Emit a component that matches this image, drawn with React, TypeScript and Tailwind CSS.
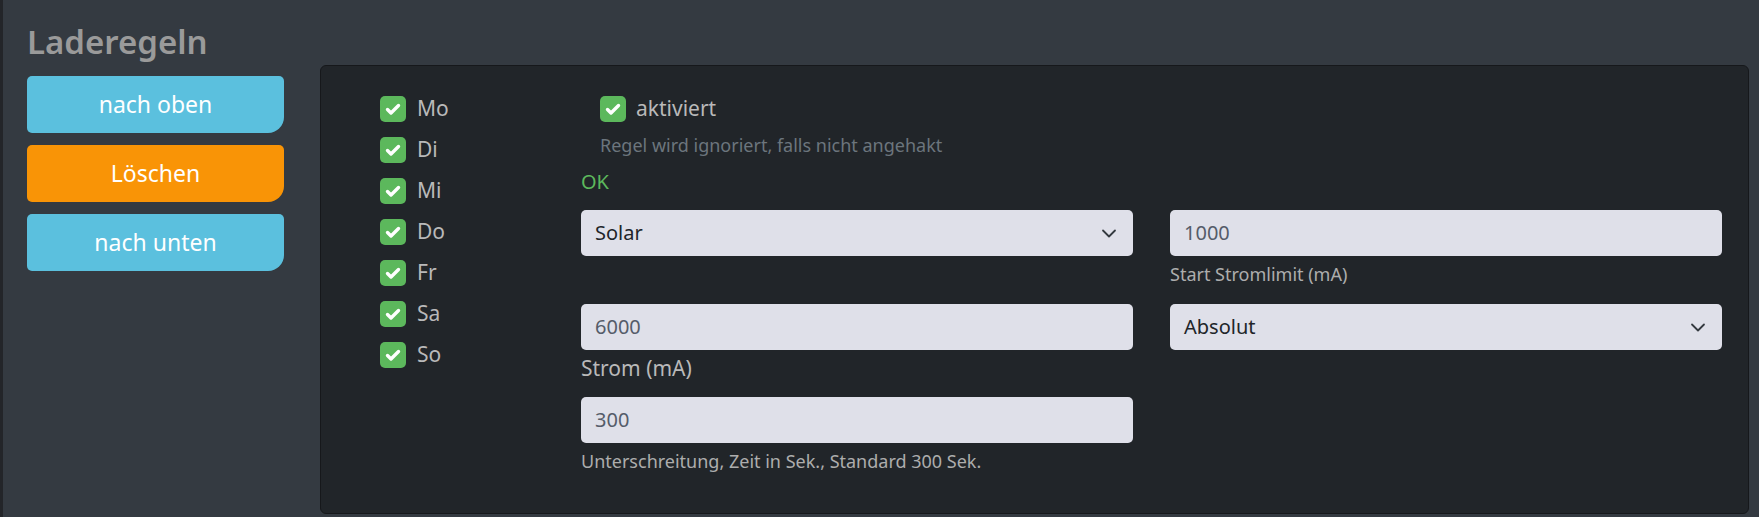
import React from 'react';

const days = ['Mo', 'Di', 'Mi', 'Do', 'Fr', 'Sa', 'So'];

function Check() {
  return (
    <span className="flex h-[26px] w-[26px] shrink-0 items-center justify-center rounded-[5px] bg-[#5cb85c]">
      <svg viewBox="0 0 26 26" className="h-[26px] w-[26px]" fill="none">
        <path d="M7.5 13.5l3.5 3.5l7.5-7.5" stroke="#fff" strokeWidth="3.4" strokeLinecap="round" strokeLinejoin="round" />
      </svg>
    </span>
  );
}

function Select({ value }: { value: string }) {
  return (
    <div className="flex h-[46px] items-center justify-between rounded-[5px] bg-[#dfe0e9] pl-[14px] pr-[16px] text-[20px] text-[#212529]">
      <span>{value}</span>
      <svg viewBox="0 0 16 16" className="h-[16px] w-[16px]" fill="none">
        <path d="M2 5.5l6 6l6-6" stroke="#343a40" strokeWidth="1.8" strokeLinecap="round" strokeLinejoin="round" />
      </svg>
    </div>
  );
}

function Field({ value }: { value: string }) {
  return (
    <div className="flex h-[46px] items-center rounded-[5px] bg-[#dfe0e9] pl-[14px] text-[20px] text-[#555c69]">
      {value}
    </div>
  );
}

export default function App() {
  return (
    <div
      className="min-h-[517px] border-l-[3px] border-[#232529] bg-[#343a41] pl-[24px]"
      style={{ fontFamily: '"Noto Sans", sans-serif' }}
    >
      <div className="flex items-start gap-[36px]">
        {/* Linke Spalte */}
        <div className="w-[257px] shrink-0">
          <h2 className="pt-[20px] text-[33px] font-semibold leading-[44px] text-[#9a9a9a]">Laderegeln</h2>
          <div className="mt-[12px] flex flex-col gap-[12px]">
            <button className="h-[57px] rounded-[5px] rounded-br-[16px] bg-[#5bc0de] text-[23px] text-white">nach oben</button>
            <button className="h-[57px] rounded-[5px] rounded-br-[16px] bg-[#f99406] text-[23px] text-white">Löschen</button>
            <button className="h-[57px] rounded-[5px] rounded-br-[16px] bg-[#5bc0de] text-[23px] text-white">nach unten</button>
          </div>
        </div>

        {/* Regel-Karte */}
        <div className="mt-[65px] flex h-[449px] w-[1429px] rounded-[6px] border border-[#16181b] bg-[#212529] pl-[59px] pt-[30px]">
          <div className="flex w-[201px] shrink-0 flex-col gap-[15px]">
            {days.map((d) => (
              <label key={d} className="flex h-[26px] items-center gap-[11px] text-[21px] text-[#b9b9b9]">
                <Check />
                <span>{d}</span>
              </label>
            ))}
          </div>

          <div className="w-[1141px]">
            <label className="ml-[19px] flex h-[26px] items-center gap-[10px] text-[21px] text-[#b9b9b9]">
              <Check />
              <span>aktiviert</span>
            </label>
            <p className="ml-[19px] mt-[11px] text-[18px] leading-[24px] text-[#6c757d]">
              Regel wird ignoriert, falls nicht angehakt
            </p>
            <p className="mt-[11px] text-[20px] leading-[28px] text-[#5cb85c]">OK</p>

            <div className="mt-[14px] grid grid-cols-2 gap-x-[37px]">
              <Select value="Solar" />
              <div>
                <Field value="1000" />
                <p className="mt-[6px] text-[18px] leading-[24px] text-[#adadad]">Start Stromlimit (mA)</p>
              </div>
            </div>

            <div className="mt-[18px] grid grid-cols-2 gap-x-[37px]">
              <div>
                <Field value="6000" />
                <p className="mt-[4px] text-[21px] leading-[28px] text-[#b9b9b9]">Strom (mA)</p>
              </div>
              <Select value="Absolut" />
            </div>

            <div className="mt-[15px] grid grid-cols-2 gap-x-[37px]">
              <div>
                <Field value="300" />
                <p className="mt-[6px] text-[18px] leading-[24px] text-[#adadad]">
                  Unterschreitung, Zeit in Sek., Standard 300 Sek.
                </p>
              </div>
            </div>
          </div>
        </div>
      </div>
    </div>
  );
}
